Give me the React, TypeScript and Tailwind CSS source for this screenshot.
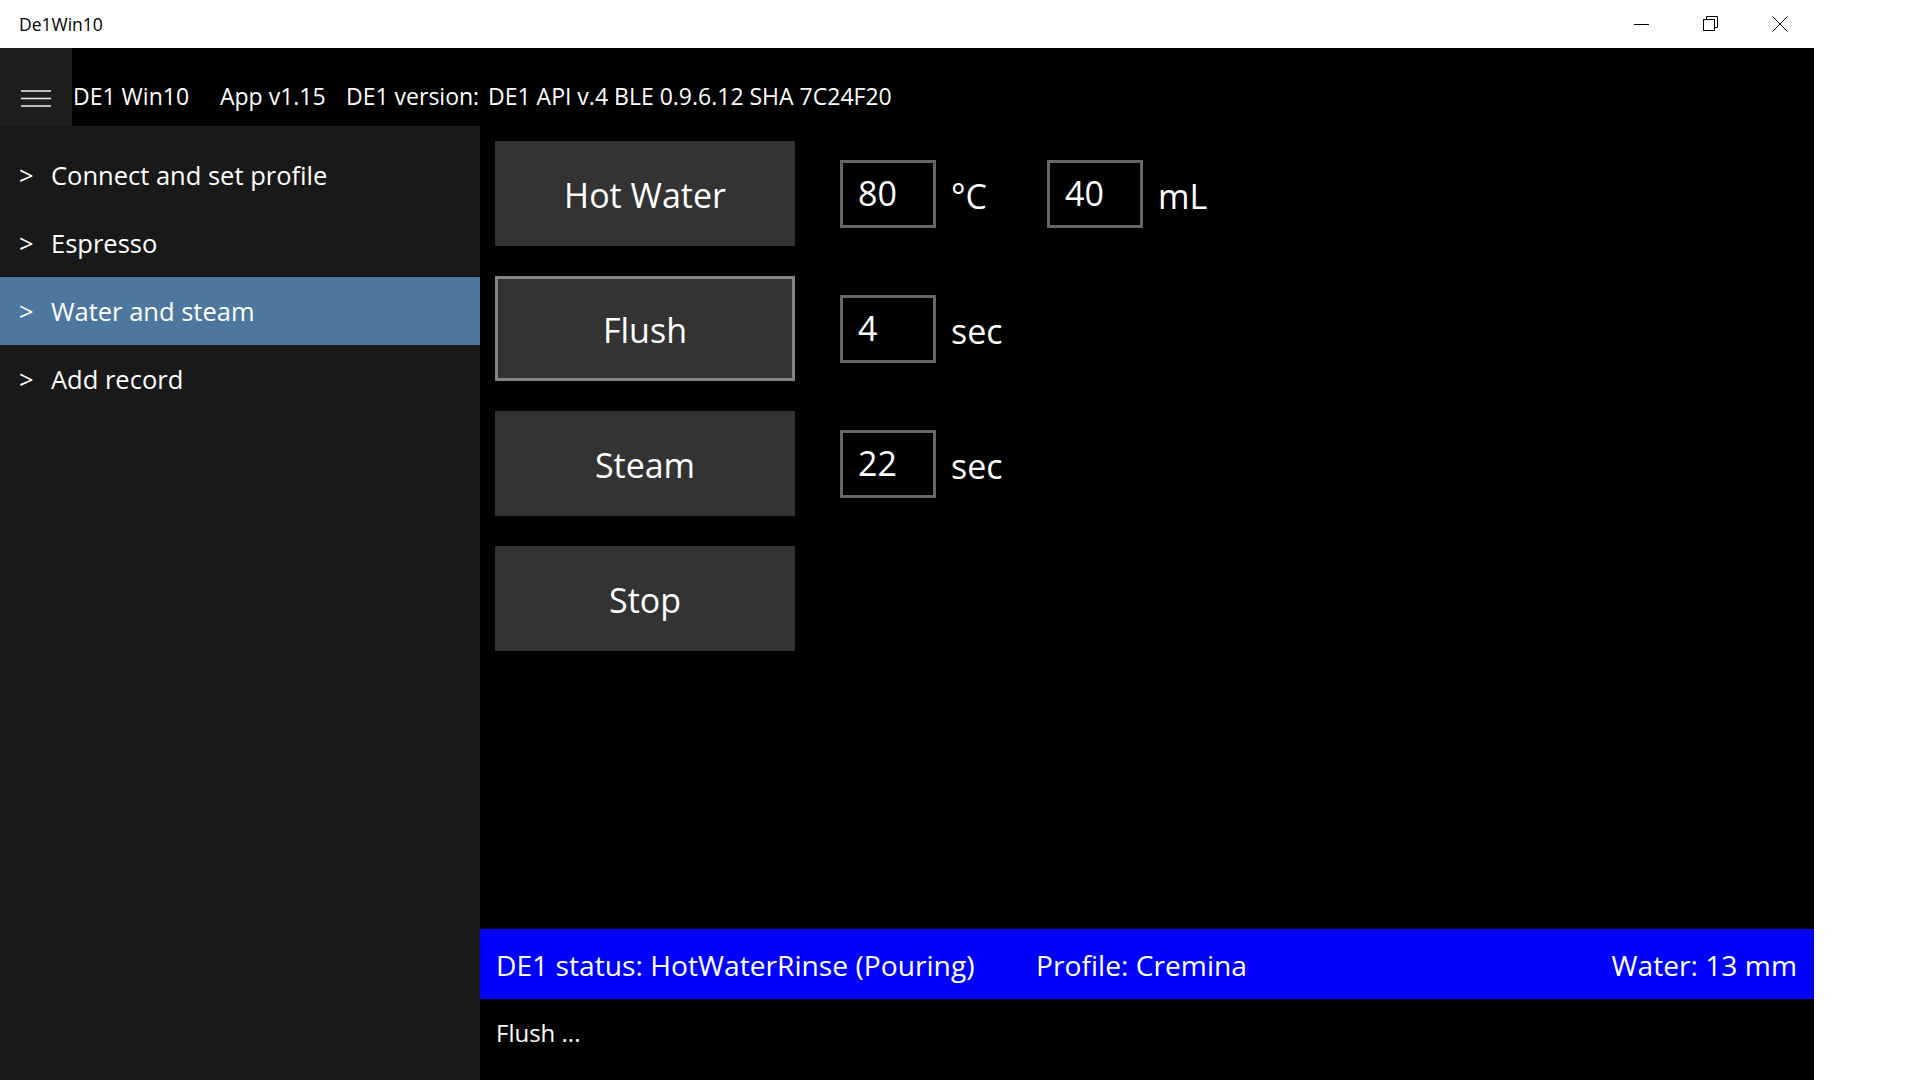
import React from "react";

const navItems = [
  { label: "Connect and set profile", active: false },
  { label: "Espresso", active: false },
  { label: "Water and steam", active: true },
  { label: "Add record", active: false },
];

function TitleBar() {
  return (
    <div className="flex h-[48px] items-center justify-between bg-white">
      <span className="pl-[19px] text-[17.5px] text-black">De1Win10</span>
      <div className="mr-[106px] flex h-full">
        <div className="grid h-full w-[69px] place-items-center">
          <svg width="16" height="16" viewBox="0 0 16 16">
            <line x1="0" y1="8.5" x2="15" y2="8.5" stroke="#000" strokeWidth="1" />
          </svg>
        </div>
        <div className="grid h-full w-[69px] place-items-center">
          <svg width="16" height="16" viewBox="0 0 16 16">
            <rect x="0.5" y="3.5" width="11" height="11" fill="none" stroke="#000" strokeWidth="1" />
            <path d="M3.5 3.5V0.5H14.5V11.5H11.5" fill="none" stroke="#000" strokeWidth="1" />
          </svg>
        </div>
        <div className="grid h-full w-[69px] place-items-center">
          <svg width="16" height="16" viewBox="0 0 16 16">
            <path d="M0.5 0.5L15.5 15.5M15.5 0.5L0.5 15.5" stroke="#000" strokeWidth="1" />
          </svg>
        </div>
      </div>
    </div>
  );
}

function Header() {
  return (
    <div className="flex h-[78px] bg-black text-[23px] text-white">
      <div className="flex w-[72px] justify-center bg-[#1f1f1f] pt-[42px]">
        <svg width="30" height="18" viewBox="0 0 30 18">
          <line x1="0" y1="1" x2="30" y2="1" stroke="#e6e6e6" strokeWidth="1.6" />
          <line x1="0" y1="8.5" x2="30" y2="8.5" stroke="#e6e6e6" strokeWidth="1.6" />
          <line x1="0" y1="16" x2="30" y2="16" stroke="#e6e6e6" strokeWidth="1.6" />
        </svg>
      </div>
      <div className="flex items-start pt-[32px] leading-[32px]">
        <span className="w-[148px] pl-[1px]">DE1 Win10</span>
        <span className="w-[126px]">App v1.15</span>
        <span className="w-[142px]">DE1 version:</span>
        <span>DE1 API v.4 BLE 0.9.6.12 SHA 7C24F20</span>
      </div>
    </div>
  );
}

function Sidebar() {
  return (
    <nav className="w-[480px] bg-[#191919] pt-[15px]">
      {navItems.map((item) => (
        <div
          key={item.label}
          className={`flex h-[68px] items-center pl-[19px] text-[25.5px] text-white ${item.active ? "bg-[#4e77a0]" : ""}`}
        >
          <span className="w-[32px]">&gt;</span>
          <span>{item.label}</span>
        </div>
      ))}
    </nav>
  );
}

function ActionButton({ label, focused }: { label: string; focused?: boolean }) {
  return (
    <button
      className={`h-[105px] w-[300px] shrink-0 bg-[#333333] pt-[4px] text-[34px] text-white ${focused ? "border-[3px] border-[#858585]" : ""}`}
    >
      {label}
    </button>
  );
}

function ValueBox({ value }: { value: string }) {
  return (
    <div className="flex h-[68px] w-[96px] shrink-0 items-center border-[3px] border-[#666666] pl-[15px] text-[34px] text-white">
      {value}
    </div>
  );
}

function Unit({ text, wide }: { text: string; wide?: boolean }) {
  return <span className={`ml-[15px] pt-[5px] text-[34px] text-white ${wide ? "w-[96px]" : ""}`}>{text}</span>;
}

export default function App() {
  return (
    <div className="flex h-[1080px] w-[1920px] flex-col overflow-hidden bg-white font-['Open_Sans',sans-serif]">
      <TitleBar />
      <div className="flex h-[1032px]">
        <div className="flex w-[1814px] flex-col bg-black">
          <Header />
          <div className="flex flex-1">
            <Sidebar />
            <main className="flex flex-1 flex-col">
              <div className="flex flex-1 flex-col gap-[30px] pl-[15px] pt-[15px]">
                <div className="flex h-[105px] items-center">
                  <ActionButton label="Hot Water" />
                  <div className="ml-[45px]">
                    <ValueBox value="80" />
                  </div>
                  <Unit text="°C" wide />
                  <ValueBox value="40" />
                  <Unit text="mL" />
                </div>
                <div className="flex h-[105px] items-center">
                  <ActionButton label="Flush" focused />
                  <div className="ml-[45px]">
                    <ValueBox value="4" />
                  </div>
                  <Unit text="sec" />
                </div>
                <div className="flex h-[105px] items-center">
                  <ActionButton label="Steam" />
                  <div className="ml-[45px]">
                    <ValueBox value="22" />
                  </div>
                  <Unit text="sec" />
                </div>
                <div className="flex h-[105px] items-center">
                  <ActionButton label="Stop" />
                </div>
              </div>
              <div className="flex h-[70px] items-center bg-[#0000ff] pt-[2px] text-[28.2px] text-white">
                <span className="w-[556px] pl-[16px]">DE1 status: HotWaterRinse (Pouring)</span>
                <span>Profile: Cremina</span>
                <span className="ml-auto pr-[17px]">Water: 13 mm</span>
              </div>
              <div className="h-[81px] pl-[16px] pt-[18px] text-[24px] leading-[32px] text-white">Flush ...</div>
            </main>
          </div>
        </div>
        <div className="flex-1 bg-white" />
      </div>
    </div>
  );
}
